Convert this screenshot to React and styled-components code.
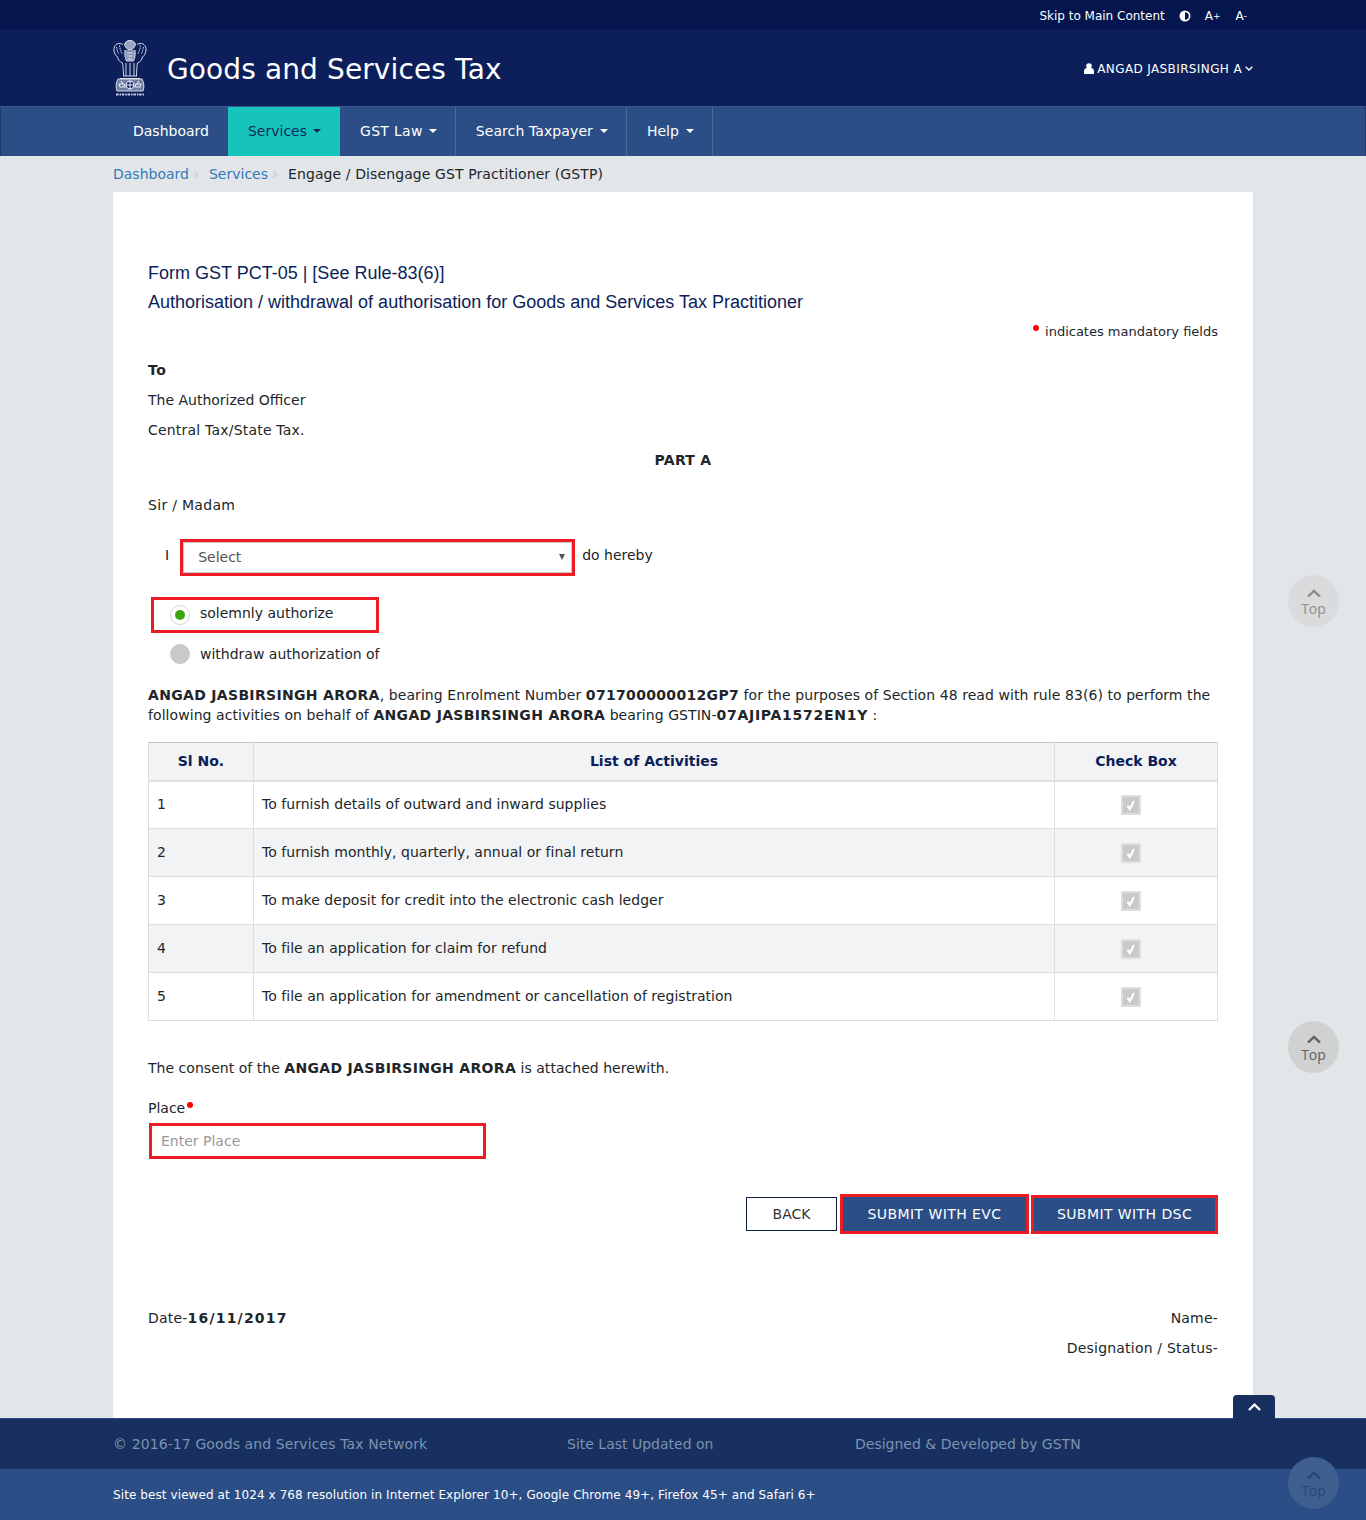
import React from 'react';
import styled, { createGlobalStyle } from 'styled-components';

const Global = createGlobalStyle`
  html, body { margin: 0; padding: 0; background: #e3e6e9; }
  body { font-family: "DejaVu Sans", Verdana, sans-serif; font-size: 14px; color: #212529; }
  b { letter-spacing: .32px; }
  * { box-sizing: border-box; }
`;
const Page = styled.div`position: relative; width: 1366px; height: 1520px; overflow: hidden; background: #e3e6e9;`;
const Wrap = styled.div`width: 1140px; margin: 0 auto; display: flex; align-items: center; justify-content: ${p => p.$justify || 'flex-start'}; height: 100%;`;
const TopBar = styled.div`height: 30px; background: #04164d; color: #fff; font-size: 12px; padding-top: 1px;`;
const TopLink = styled.span`display: inline-flex; align-items: center; margin-left: ${p => p.$ml || 15}px;`;
const Sup = styled.sup`font-size: 9px; line-height: 0;`;
const Header = styled.header`height: 76px; background: #0c1f5a; color: #fff;`;
const Brand = styled.div`display: flex; align-items: center; gap: 20px;`;
const BrandName = styled.h1`margin: 2px 0 0; font-size: 28px; font-weight: 400; color: #fff; letter-spacing: .12px;`;
const User = styled.div`margin-left: auto; font-size: 12px; display: flex; align-items: center; gap: 3px; letter-spacing: .38px; padding-top: 1px;`;
const Nav = styled.nav`height: 50px; background: #2c4e86; border: 1px solid #1d3a6e; border-bottom-color: #2c4e86; border-top-color: #3a5a8f;`;
const NavList = styled.div`width: 1140px; margin: 0 auto; display: flex; height: 49px;`;
const NavItem = styled.div`
  display: flex; align-items: center; padding: 0 18px 2px 20px; font-size: 14px; letter-spacing: ${p => p.$ls || 0}px;
  color: ${p => p.$active ? '#0e2a5c' : '#fff'};
  background: ${p => p.$active ? '#17c4bb' : 'transparent'};
  border-right: 1px solid ${p => p.$noline ? 'transparent' : '#46689b'};
`;
const Caret = styled.span`width: 0; height: 0; border-left: 4px solid transparent; border-right: 4px solid transparent; border-top: 4px solid currentColor; margin-left: ${p => p.$gap || 6}px;`;
const Crumbs = styled.div`width: 1140px; margin: 0 auto; height: 36px; display: flex; align-items: center; font-size: 14px;`;
const CrumbLink = styled.span`color: #337ab7;`;
const CrumbCurrent = styled.span`letter-spacing: .1px;`;
const CrumbSep = styled.span`color: #c4c8cc; margin: 0 10px 0 4px; font-size: 15px;`;
const Card = styled.main`width: 1140px; height: 1226px; margin: 0 auto; background: #fff; padding: 66px 35px 0;`;
const Title = styled.div`font-family: "Liberation Sans", Arial, sans-serif; font-size: 18px; line-height: 30px; color: #0b1e59; height: 29px;`;
const Mandatory = styled.div`text-align: right; line-height: 30px; font-size: 13px; height: 30px; padding-top: 1px;`;
const Dot = styled.span`display: inline-block; width: 6px; height: 6px; background: #f00; border-radius: 50%; vertical-align: 5px; margin: 0 ${p => p.$mr ?? 0}px 0 ${p => p.$ml ?? 0}px;`;
const Line = styled.div`line-height: 30px; text-align: ${p => p.$align || 'left'}; margin-top: ${p => p.$mt || 0}px; font-weight: ${p => p.$bold ? 700 : 400}; letter-spacing: ${p => p.$ls ?? 0}px;`;
const SelectRow = styled.div`display: flex; align-items: center; margin-top: 19px; height: 37px; padding-left: 17px;`;
const RowText = styled.span`position: relative; top: -3px;`;
const SelectBox = styled.div`
  position: relative; width: 395px; height: 37px; margin: 0 7px 0 11px; border: 3px solid #ed1c24; padding: 0 15px 2px; display: flex; align-items: center; color: #555; box-shadow: inset 0 0 0 1px #ccc;
  &::after { content: ''; position: absolute; right: 7px; top: 12px; border-left: 3px solid transparent; border-right: 3px solid transparent; border-top: 6px solid #555; }
`;
const HighRadio = styled.div`display: flex; align-items: center; width: 228px; height: 36px; margin: 21px 0 0 3px; border: 3px solid #ed1c24; padding-left: 16px; gap: 10px;`;
const PlainRadio = styled.div`display: flex; align-items: center; height: 36px; margin: 3px 0 0 3px; padding-left: 19px; gap: 10px;`;
const RadioText = styled.span`position: relative; top: ${p => p.$top || 0}px;`;
const RadioDot = styled.span`
  width: 20px; height: 20px; border-radius: 50%; flex: none; display: flex; align-items: center; justify-content: center;
  background: ${p => p.$on ? '#fff' : '#c9c9c9'}; border: 1px solid ${p => p.$on ? '#cfd8cc' : '#c9c9c9'};
  &::after { content: ''; width: 10px; height: 10px; border-radius: 50%; background: ${p => p.$on ? '#3aa50f' : 'transparent'}; }
`;
const Para = styled.p`margin: 13px 0 0; line-height: 20px; letter-spacing: .07px;`;
const WideBold = styled.b`letter-spacing: .72px;`;
const Table = styled.table`width: 1069px; margin-top: 17px; border-collapse: collapse; table-layout: fixed;`;
const Th = styled.th`height: 38px; background: #f2f3f5; border: 1px solid #dcdfe2; border-top-color: #bcc3cc; border-bottom-width: 2px; font-size: 14px; font-weight: 700; color: #0b1e59; text-align: center; padding: 0;`;
const Tr = styled.tr`background: ${p => p.$alt ? '#f2f3f5' : '#fff'};`;
const Td = styled.td`height: 48px; border: 1px solid #dcdfe2; padding: 0 8px 2px; text-align: left; vertical-align: middle; letter-spacing: .03px;`;
const CheckCell = styled(Td)`padding: 0 10px 0 0; text-align: center;`;
const Check = styled.span`display: inline-flex; width: 20px; height: 20px; background: #c9c9c9; border: 2px solid #dedede; align-items: center; justify-content: center; vertical-align: middle;`;
const Consent = styled.p`margin: 37px 0 0; line-height: 20px; letter-spacing: .03px;`;
const Label = styled.div`margin-top: 20px; line-height: 20px;`;
const PlaceInput = styled.div`width: 337px; height: 36px; margin: 5px 0 0 1px; border: 3px solid #ed1c24; padding-left: 9px; display: flex; align-items: center; color: #999;`;
const Actions = styled.div`display: flex; justify-content: flex-end; align-items: center; margin-top: 35px; height: 40px;`;
const Button = styled.button`
  font: inherit; font-size: 14px; cursor: pointer; text-transform: uppercase; padding: 0; display: block;
  letter-spacing: ${p => p.$primary ? .42 : 0}px;
  width: ${p => p.$w}px; height: ${p => p.$h}px; margin-left: ${p => p.$ml}px;
  color: ${p => p.$primary ? '#fff' : '#333'};
  background: ${p => p.$primary ? '#2c4e86' : '#fff'};
  border: ${p => p.$primary ? '3px solid #ed1c24' : '1px solid #0b1e3e'};
`;
const SignRow = styled.div`display: flex; justify-content: space-between; margin-top: ${p => p.$mt || 0}px; line-height: 30px; letter-spacing: .2px;`;
const DateValue = styled.b`letter-spacing: 1.2px;`;
const FooterTop = styled.footer`height: 51px; background: #17305f; border-top: 1px solid #2c4e86; color: #7c93b2; font-size: 14px; position: relative;`;
const FooterGrid = styled.div`width: 1140px; margin: 0 auto; display: flex; height: 100%; align-items: center;`;
const FootCell = styled.div`width: ${p => p.$w}px; letter-spacing: ${p => p.$ls || 0}px;`;
const FooterBottom = styled.div`height: 51px; background: #2c4e86; color: #fff; font-size: 12px; letter-spacing: .09px;`;
const ScrollTab = styled.div`position: absolute; left: 1233px; top: -24px; width: 42px; height: 24px; background: #17305f; border-radius: 4px 4px 0 0; display: flex; align-items: center; justify-content: center;`;
const TopBtn = styled.div`
  position: absolute; left: 1288px; top: ${p => p.$top}px; width: 51px; height: 52px; border-radius: 50%;
  background: ${p => p.$bg}; color: ${p => p.$fg}; font-family: "Open Sans", sans-serif; font-size: 14px; line-height: 16px;
  display: flex; flex-direction: column; align-items: center; justify-content: center; padding-top: 4px; gap: 4px;
`;
const Spacer = styled.span`width: 6px;`;
const Emblem = () => (
  <svg width="34" height="58" viewBox="0 0 34 58" fill="none" stroke="#e6eaf3" strokeWidth=".9" style={{ flex: 'none' }}>
    <path d="M17 1.500c-3 0-5 1.500-5.500 4 1 3 2.500 5 5.500 5.500 3-.5 4.500-2.500 5.500-5.500-.5-2.500-2.500-4-5.500-4z" fill="#9aa6c4" />
    <path d="M10 5.500C6 3 1.500 5 1 9.500c-.5 3.500 1 6.500 3.500 8.500.5 3 2.500 5 5 6M24 5.500c4-2.500 8.500-.5 9 4 .5 3.500-1 6.500-3.500 8.500-.5 3-2.500 5-5 6" />
    <path d="M3.500 8c1 3 .5 5 2.500 7M6.500 6.500c.5 3 1 6 3 8.500M30.500 8c-1 3-.5 5-2.500 7M27.500 6.500c-.5 3-1 6-3 8.500" strokeDasharray="1.500 .8" />
    <path d="M12 11c-.5 4 0 8 1.500 11h7c1.500-3 2-7 1.500-11" fill="#8490b2" />
    <path d="M14 14h6M14 17h6M14.500 20h5M9.500 24c.5 3 1 7 1 13M24.500 24c-.5 3-1 7-1 13M13 24v13M17 24v13M21 24v13" />
    <path d="M10 37h14M7 39.500h20" />
    <path d="M5 40c-2 3-2.500 9-1 12h26c1.500-3 1-9-1-12z" fill="#6f7ca1" />
    <circle cx="17" cy="46" r="3.800" fill="#0c1f5a" strokeWidth="1.200" />
    <path d="M17 42.500v7M13.500 46h7M6 45h5l1 3H7zM28 45h-5l-1 3h5zM8 42l2 3M26 42l-2 3" strokeWidth="1.100" />
    <path d="M3 55.500h28" strokeWidth="2.200" strokeDasharray="2.500 1 1.500 .8" stroke="#c6cde0" />
  </svg>
);
const Chevron = ({ color = 'currentColor', w = 14, sw = 2.4 }) => (
  <svg width={w} height={w * 0.6} viewBox="0 0 14 8.4" fill="none" stroke={color} strokeWidth={sw}><path d="M1 7.600 7 1.800l6 5.800" /></svg>
);
const ROWS = [
  'To furnish details of outward and inward supplies',
  'To furnish monthly, quarterly, annual or final return',
  'To make deposit for credit into the electronic cash ledger',
  'To file an application for claim for refund',
  'To file an application for amendment or cancellation of registration',
];
export default function App() {
  return (
    <Page>
      <Global />
      <TopBar>
        <Wrap $justify="flex-end">
          <TopLink>Skip to Main Content</TopLink>
          <TopLink $ml={14}>
            <svg width="12" height="12" viewBox="0 0 12 12"><circle cx="6" cy="6" r="5.500" fill="#fff" /><path d="M6 2.200a3.800 3.800 0 0 1 0 7.600z" fill="#04164d" /></svg>
          </TopLink>
          <TopLink $ml={14}>A<Sup>+</Sup></TopLink>
          <TopLink $ml={15}>A<Sup>-</Sup><Spacer /></TopLink>
        </Wrap>
      </TopBar>
      <Header>
        <Wrap>
          <Brand><Emblem /><BrandName>Goods and Services Tax</BrandName></Brand>
          <User>
            <svg width="10" height="11" viewBox="0 0 10 11" fill="#fff"><circle cx="5" cy="3" r="2.800" /><path d="M0 11V8c0-1.800 1.600-3 3-3h4c1.400 0 3 1.200 3 3v3z" /></svg>
            ANGAD JASBIRSINGH A
            <svg width="8" height="5" viewBox="0 0 8 5" fill="none" stroke="#fff" strokeWidth="1.300"><path d="M.7.800 4 4l3.300-3.200" /></svg>
          </User>
        </Wrap>
      </Header>
      <Nav>
        <NavList>
          <NavItem $noline>Dashboard</NavItem>
          <NavItem $active $noline>Services <Caret /></NavItem>
          <NavItem $ls={.3}>GST Law <Caret /></NavItem>
          <NavItem $ls={.1}>Search Taxpayer <Caret $gap={7} /></NavItem>
          <NavItem>Help <Caret $gap={7} /></NavItem>
        </NavList>
      </Nav>
      <Crumbs>
        <CrumbLink>Dashboard</CrumbLink><CrumbSep>›</CrumbSep>
        <CrumbLink>Services</CrumbLink><CrumbSep>›</CrumbSep>
        <CrumbCurrent>Engage / Disengage GST Practitioner (GSTP)</CrumbCurrent>
      </Crumbs>
      <Card>
        <Title>Form GST PCT-05 | [See Rule-83(6)]</Title>
        <Title>Authorisation / withdrawal of authorisation for Goods and Services Tax Practitioner</Title>
        <Mandatory><Dot $mr={6} />indicates mandatory fields</Mandatory>
        <Line $mt={9} $bold $ls={.6}>To</Line>
        <Line>The Authorized Officer</Line>
        <Line $ls={.2}>Central Tax/State Tax.</Line>
        <Line $align="center" $bold $ls={.3}>PART A</Line>
        <Line $mt={15} $ls={.3}>Sir / Madam</Line>
        <SelectRow>
          <RowText>I</RowText>
          <SelectBox>Select</SelectBox>
          <RowText>do hereby</RowText>
        </SelectRow>
        <HighRadio><RadioDot $on /><RadioText $top={-2}>solemnly authorize</RadioText></HighRadio>
        <PlainRadio><RadioDot /><RadioText>withdraw authorization of</RadioText></PlainRadio>
        <Para>
          <b>ANGAD JASBIRSINGH ARORA</b>, bearing Enrolment Number <b>071700000012GP7</b> for the purposes of Section 48 read with rule 83(6) to perform the following activities on behalf of <b>ANGAD JASBIRSINGH ARORA</b> bearing GSTIN-<WideBold>07AJIPA1572EN1Y</WideBold> :
        </Para>
        <Table>
          <colgroup><col width="105" /><col width="801" /><col width="163" /></colgroup>
          <thead>
            <tr><Th>Sl No.</Th><Th>List of Activities</Th><Th>Check Box</Th></tr>
          </thead>
          <tbody>
            {ROWS.map((r, i) => (
              <Tr key={r} $alt={i % 2 === 1}>
                <Td>{i + 1}</Td>
                <Td>{r}</Td>
                <CheckCell>
                  <Check>
                    <svg width="14" height="14" viewBox="0 0 12 12" fill="none" stroke="#fff" strokeWidth="1.800"><path d="m3 6.500 2 3 3.500-7" /></svg>
                  </Check>
                </CheckCell>
              </Tr>
            ))}
          </tbody>
        </Table>
        <Consent>The consent of the <b>ANGAD JASBIRSINGH ARORA</b> is attached herewith.</Consent>
        <Label>Place<Dot $ml={2} /></Label>
        <PlaceInput>Enter Place</PlaceInput>
        <Actions>
          <Button $w={91} $h={34}>Back</Button>
          <Button $primary $w={189} $h={40} $ml={3}>Submit with EVC</Button>
          <Button $primary $w={187} $h={39} $ml={2}>Submit with DSC</Button>
        </Actions>
        <SignRow $mt={69}><span>Date-<DateValue>16/11/2017</DateValue></span><span>Name-</span></SignRow>
        <SignRow><span /><span>Designation / Status-</span></SignRow>
      </Card>
      <FooterTop>
        <ScrollTab><Chevron color="#fff" w={13} /></ScrollTab>
        <FooterGrid>
          <FootCell $w={454} $ls={.1}>© 2016-17 Goods and Services Tax Network</FootCell>
          <FootCell $w={288}>Site Last Updated on</FootCell>
          <FootCell $w={300}>Designed &amp; Developed by GSTN</FootCell>
        </FooterGrid>
      </FooterTop>
      <FooterBottom>
        <Wrap>Site best viewed at 1024 x 768 resolution in Internet Explorer 10+, Google Chrome 49+, Firefox 45+ and Safari 6+</Wrap>
      </FooterBottom>
      <TopBtn $top={575} $bg="#d9dbdd" $fg="#8b8d90"><Chevron /><span>Top</span></TopBtn>
      <TopBtn $top={1021} $bg="#d0d2d1" $fg="#5f6163"><Chevron /><span>Top</span></TopBtn>
      <TopBtn $top={1457} $bg="#3f5f91" $fg="#27477c"><Chevron /><span>Top</span></TopBtn>
    </Page>
  );
}
